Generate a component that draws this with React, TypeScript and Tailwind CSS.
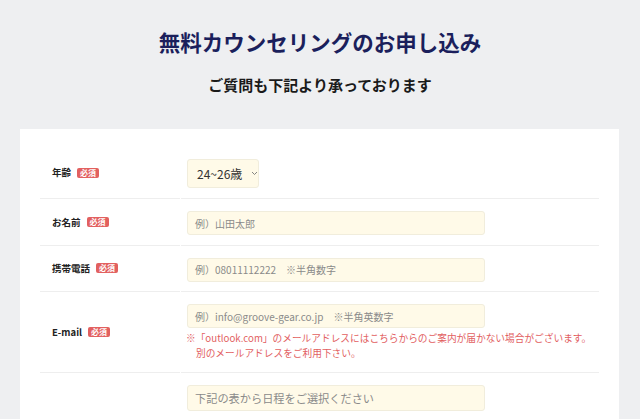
import React from 'react';

const font = { fontFamily: '"Noto Sans CJK JP", "Noto Sans", sans-serif' };

const Badge: React.FC = () => (
  <span className="ml-[6px] inline-flex h-[10px] w-[22px] items-center justify-center rounded-[2px] bg-[#e2605f] text-[8px] font-bold leading-none text-white">
    必須
  </span>
);

interface RowProps {
  label: string;
  children: React.ReactNode;
}

const Row: React.FC<RowProps> = ({ label, children }) => (
  <>
    <div className="flex items-center border-b border-[#eeeeee] pl-3 text-[9.5px] font-bold text-[#222]">
      {label}
      <Badge />
    </div>
    <div className="border-b border-[#eeeeee] pl-[6px] pt-[12px] pb-[9.5px]">{children}</div>
  </>
);

const Field: React.FC<{ placeholder: string; big?: boolean }> = ({ placeholder, big }) => (
  <div
    className={`flex w-[298px] items-center whitespace-nowrap rounded-[3px] border border-[#f1eddc] bg-[#fffae8] pl-[7px] text-[#8a8a8a] ${
      big ? 'h-[26px] text-[11.2px]' : 'h-[24px] text-[10px]'
    }`}
  >
    {placeholder}
  </div>
);

export default function App() {
  return (
    <div className="min-h-[419px] bg-[#eeeff1]" style={font}>
      <div className="pt-[27px] text-center">
        <h1 className="text-[21.5px] font-bold leading-[30px] text-[#1b1f5c]">
          無料カウンセリングのお申し込み
        </h1>
        <p className="mt-[17px] text-[15px] font-bold leading-[22px] text-[#1a1a1a]">
          ご質問も下記より承っております
        </p>
      </div>

      <div className="ml-5 mr-[21px] mt-[33px] bg-white px-5 pt-[18px]">
        <div className="grid grid-cols-[140px_1fr] gap-x-px">
          <Row label="年齢">
            <div className="mb-[0.5px] flex h-[29px] w-[72px] items-center whitespace-nowrap rounded-[3px] border border-[#f1eddc] bg-[#fffae8] pl-[9px] text-[12px] text-[#333]">
              <span>24~26歳</span>
              <svg className="ml-[9px] shrink-0" width="7" height="5" viewBox="0 0 7 5" fill="none">
                <path d="M1 1l2.5 2.5L6 1" stroke="#777" strokeWidth="0.9" />
              </svg>
            </div>
          </Row>
          <Row label="お名前">
            <Field placeholder="例）山田太郎" />
          </Row>
          <Row label="携帯電話">
            <Field placeholder="例）08011112222　※半角数字" />
          </Row>
          <Row label="E-mail">
            <Field placeholder="例）info@groove-gear.co.jp　※半角英数字" />
            <div className="mt-[2.5px] mb-[2px] text-[9.7px] leading-[15px] text-[#e2605f]">
              <p className="-ml-[1px]">※「outlook.com」のメールアドレスにはこちらからのご案内が届かない場合がございます。</p>
              <p className="pl-[9px]">別のメールアドレスをご利用下さい。</p>
            </div>
          </Row>
          <div className="pl-3" />
          <div className="pl-[6px] pt-[12px] pb-[10px]">
            <Field placeholder="下記の表から日程をご選択ください" big />
          </div>
        </div>
      </div>
    </div>
  );
}
